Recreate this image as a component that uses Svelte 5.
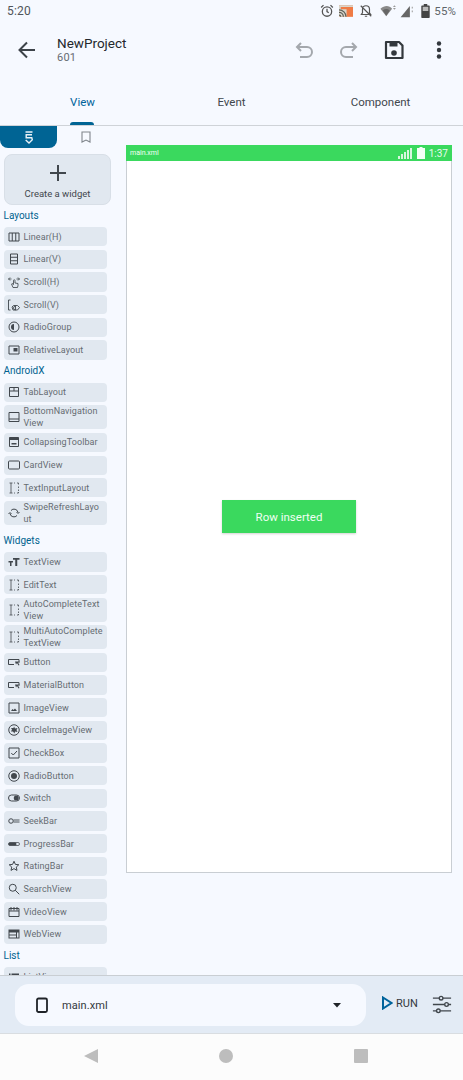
<script>
  const icons = {
    linh: '<path d="M2 4h20v16H2zM8.500 4v16M15.500 4v16" fill="none" stroke="currentColor" stroke-width="2"/>',
    linv: '<path d="M5 2h14v20H5zM5 8.500h14M5 15.500h14" fill="none" stroke="currentColor" stroke-width="2"/>',
    sh: '<path d="M10 23l-3-7 1-1 3 2V9a1.500 1.500 0 0 1 3 0v5l6 1v4l-1 4zM1 6l3-3M1 6l3 3M23 6l-3-3M23 6l-3 3M1 6h6M17 6h6" fill="none" stroke="currentColor" stroke-width="1.700"/>',
    sv: '<path d="M1 2h4M1 2v20h4M10 22l-2-6 3-3 8 0 4 4-4 5h-6zM15 14a4 4 0 1 0 .1 8z" fill="none" stroke="currentColor" stroke-width="1.800"/>',
    radio: '<circle cx="12" cy="12" r="10" fill="none" stroke="currentColor" stroke-width="2"/><path d="M12 6a6 6 0 0 0 0 12z" fill="currentColor"/>',
    rel: '<path d="M2 4h20v16H2z" fill="none" stroke="currentColor" stroke-width="2"/><path d="M11 8h8v7h-8z" fill="currentColor"/>',
    tab: '<path d="M3 3h18v18H3zM3 10h18M12 3v7" fill="none" stroke="currentColor" stroke-width="2"/>',
    bottom: '<path d="M2 3h20v18H2zM2 16h20" fill="none" stroke="currentColor" stroke-width="2"/>',
    coll: '<path d="M3 3h18v18H3z" fill="none" stroke="currentColor" stroke-width="2"/><path d="M3 3h18v5H3z" fill="currentColor"/><path d="M7 14h10v3H7z" fill="currentColor"/>',
    card: '<rect x="1" y="4" width="22" height="16" rx="2" fill="none" stroke="currentColor" stroke-width="2"/>',
    input: '<path d="M3 2h6M3 22h6M6 2v20M12 2h2M12 22h2M18 2h3v3M21 9v3M21 15v3M21 20v2h-3" fill="none" stroke="currentColor" stroke-width="1.600"/>',
    swipe: '<path d="M4 13a8 8 0 0 0 14 4M20 11A8 8 0 0 0 6 7M17 10l3 3 3-3M1 14l3-3 3 3" fill="none" stroke="currentColor" stroke-width="2"/>',
    text: '<path d="M10 4h13v3.500h-4.500V20h-4V7.500H10zM1 10h9v3H7v7H4v-7H1z" fill="currentColor"/>',
    button: '<path d="M22 13V7H1v10h11" fill="none" stroke="currentColor" stroke-width="2"/><path d="M14 11h9v2h-3l3 5-2 1-3-5-2 3z" fill="currentColor"/>',
    image: '<path d="M2 2h20v20H2z" fill="none" stroke="currentColor" stroke-width="2"/><path d="M6 18l3-4 2 2 3-3 4 5z" fill="currentColor"/>',
    circle: '<circle cx="12" cy="12" r="10.500" fill="none" stroke="currentColor" stroke-width="2"/><path d="M12 5l2 4 5-1-2 4 2 4-5-1-1 4-3-4-4 0 2-4-2-3 5 0z" fill="currentColor"/>',
    check: '<path d="M2 2h20v20H2z" fill="none" stroke="currentColor" stroke-width="2"/><path d="M6.500 12l4 4L18 8" fill="none" stroke="currentColor" stroke-width="2"/>',
    radiob: '<circle cx="12" cy="12" r="10.500" fill="none" stroke="currentColor" stroke-width="2"/><circle cx="12" cy="12" r="6" fill="currentColor"/>',
    sw: '<rect x="1" y="6" width="22" height="12" rx="6" fill="none" stroke="currentColor" stroke-width="2"/><circle cx="16.500" cy="12" r="5" fill="currentColor"/>',
    seek: '<circle cx="6" cy="12" r="4.500" fill="none" stroke="currentColor" stroke-width="2"/><path d="M11 10h12M11 14h12" stroke="currentColor" stroke-width="1.800"/>',
    progress: '<rect x="1" y="9" width="22" height="6" rx="3" fill="none" stroke="currentColor" stroke-width="1.500"/><rect x="1" y="9" width="16" height="6" rx="3" fill="currentColor"/>',
    star: '<path d="M12 2.500l2.800 6.300 6.800.7-5.100 4.600 1.500 6.700L12 17.300l-6 3.500 1.500-6.700-5.100-4.600 6.800-.7z" fill="none" stroke="currentColor" stroke-width="2"/>',
    search: '<circle cx="9.500" cy="9.500" r="7" fill="none" stroke="currentColor" stroke-width="2"/><path d="M14.500 14.500l8 8" stroke="currentColor" stroke-width="2"/>',
    video: '<path d="M2 5h20v16H2zM2 10h20" fill="none" stroke="currentColor" stroke-width="2"/><path d="M6 2v7M12 2v7M18 2v7" stroke="currentColor" stroke-width="2"/>',
    web: '<path d="M1 3h22v18H1z" fill="currentColor"/><path d="M3 9h13v4H3zM3 15h13v4H3zM18 9h3v10h-3z" fill="#e1e8f0"/>',
    list: '<path d="M2 5h3v3H2zM7 5h15v3H7z" fill="currentColor"/>'
  };

  const sections = [
    { title: 'Layouts', items: [['linh', 'Linear(H)'], ['linv', 'Linear(V)'], ['sh', 'Scroll(H)'], ['sv', 'Scroll(V)'], ['radio', 'RadioGroup'], ['rel', 'RelativeLayout']] },
    { title: 'AndroidX', extra: true, items: [['tab', 'TabLayout'], ['bottom', 'BottomNavigation\nView'], ['coll', 'CollapsingToolbar'], ['card', 'CardView'], ['input', 'TextInputLayout'], ['swipe', 'SwipeRefreshLayo\nut']] },
    { title: 'Widgets', items: [['text', 'TextView'], ['input', 'EditText'], ['input', 'AutoCompleteText\nView'], ['input', 'MultiAutoComplete\nTextView'], ['button', 'Button'], ['button', 'MaterialButton'], ['image', 'ImageView'], ['circle', 'CircleImageView'], ['check', 'CheckBox'], ['radiob', 'RadioButton'], ['sw', 'Switch'], ['seek', 'SeekBar'], ['progress', 'ProgressBar'], ['star', 'RatingBar'], ['search', 'SearchView'], ['video', 'VideoView'], ['web', 'WebView']] },
    { title: 'List', items: [['list', 'ListView']] }
  ];
</script>

<div class="screen">
  <header class="status">
    <span class="time">5:20</span>
    <div class="status-icons">
      <svg width="14" height="14" viewBox="0 0 24 24"><circle cx="12" cy="13" r="8" fill="none" stroke="#555" stroke-width="2.200"/><path d="M12 8v5l3 2M2 6l4-4M22 6l-4-4" fill="none" stroke="#555" stroke-width="2.200"/></svg>
      <svg class="cast" width="14" height="12" viewBox="0 0 24 20"><path d="M0 0h24v20H0z" fill="#ef7b45"/><path d="M0 0h24v3H3v4H0zM0 7h13v13H0z" fill="#d9d6cc"/><path d="M0 8a12 12 0 0 1 12 12M0 12.500A7.500 7.500 0 0 1 7.500 20M0 17a3 3 0 0 1 3 3" fill="none" stroke="#5f6058" stroke-width="2.200"/></svg>
      <svg class="bell" width="14" height="14" viewBox="0 0 24 24"><path d="M12 3a6 6 0 0 0-6 6v6l-2 3h16l-2-3V9a6 6 0 0 0-6-6zM10 21h4M3 3l18 18" fill="none" stroke="#555" stroke-width="2"/></svg>
      <svg class="wifi" width="18" height="14" viewBox="0 0 30 24"><path d="M2 8c7-6 15-6 20 0l-10 13z" fill="#8a8a8a"/><path d="M6 11c4-3 8-3 12 0l-6 9z" fill="#666"/><path d="M26 2l2.500 3h-5zM26 10l2.500-3h-5z" fill="#999"/></svg>
      <svg class="signal" width="16" height="14" viewBox="0 0 26 22"><path d="M1 21L16 3v18z" fill="#666"/><path d="M19 4h2v3h-2zM19 10h2v3h-2z" fill="#aaa"/></svg>
      <svg class="battery" width="9" height="14" viewBox="0 0 12 20"><path d="M3.500 0h5v2H11a1 1 0 0 1 1 1v16a1 1 0 0 1-1 1H1a1 1 0 0 1-1-1V3a1 1 0 0 1 1-1h2.500z" fill="#444"/><path d="M2 4h8v6H2z" fill="#bbb"/></svg>
      <span class="pct">55%</span>
    </div>
  </header>

  <div class="toolbar">
    <svg class="back" width="24" height="24" viewBox="0 0 24 24"><path d="M20 12H5M12 4.500L4.500 12l7.500 7.500" fill="none" stroke="#3d4349" stroke-width="2"/></svg>
    <div class="titles">
      <div class="title">NewProject</div>
      <div class="sub">601</div>
    </div>
    <div class="actions">
      <svg class="act" width="24" height="24" viewBox="0 0 24 24"><path d="M9 5L5 9l4 4M5 9h10a4.500 4.500 0 0 1 0 10H8" fill="none" stroke="#a4a8ad" stroke-width="2"/></svg>
      <svg class="act" width="24" height="24" viewBox="0 0 24 24"><path d="M15 5l4 4-4 4M19 9H9a4.500 4.500 0 0 0 0 10h7" fill="none" stroke="#a4a8ad" stroke-width="2"/></svg>
      <svg class="act" width="24" height="24" viewBox="0 0 24 24"><path d="M4 4h13l3.500 3.500V20H4z" fill="none" stroke="#33383d" stroke-width="2.200" stroke-linejoin="round"/><path d="M7.500 4h8v4.500h-8z" fill="#33383d"/><circle cx="12" cy="15" r="2.800" fill="#33383d"/></svg>
      <svg class="act" width="24" height="24" viewBox="0 0 24 24"><circle cx="12" cy="5.500" r="2.200" fill="#33383d"/><circle cx="12" cy="12" r="2.200" fill="#33383d"/><circle cx="12" cy="18.500" r="2.200" fill="#33383d"/></svg>
    </div>
  </div>

  <nav class="tabs">
    <div class="tab active">View<span class="ind"></span></div>
    <div class="tab">Event</div>
    <div class="tab">Component</div>
  </nav>

  <main class="main">
    <aside class="side">
      <div class="side-tabs">
        <div class="side-tab on">
          <svg width="8" height="13" viewBox="0 0 8 13"><path d="M.5 1h7M7 3.800H1.200v3h5.600l.5 2L4 12 .7 9" fill="none" stroke="#e8f1f7" stroke-width="1.400"/></svg>
        </div>
        <div class="side-tab">
          <svg width="10" height="12" viewBox="0 0 10 12"><path d="M1 1h8v10L5 9l-4 2z" fill="none" stroke="#80868c" stroke-width="1.100"/></svg>
        </div>
      </div>
      <div class="create">
        <svg width="20" height="20" viewBox="0 0 20 20"><path d="M10 2v16M2 10h16" stroke="#41474d" stroke-width="2"/></svg>
        <span>Create a widget</span>
      </div>
      <div class="palette">
        {#each sections as s}
          <div class="sec">{s.title}</div>
          <div class="items" class:extra={s.extra}>
            {#each s.items as [ic, label]}
              <div class="item">
                <svg class="ic" viewBox="0 0 24 24">{@html icons[ic]}</svg>
                <span class="lbl">{label}</span>
              </div>
            {/each}
          </div>
        {/each}
      </div>
    </aside>

    <section class="stage">
      <div class="phone">
        <div class="phone-bar">
          <span class="fname">main.xml</span>
          <div class="phone-st">
            <svg width="15" height="11" viewBox="0 0 15 11"><path d="M0 8h2v3H0zM3 6h2v5H3zM6 4h2v7H6zM9 2h2v9H9zM12 0h2v11h-2z" fill="#d8f6df"/></svg>
            <svg width="8" height="12" viewBox="0 0 8 12"><path d="M2.500 0h3v1H8v11H0V1h2.500z" fill="#f4fff6"/></svg>
            <span class="clock">1:37</span>
          </div>
        </div>
        <div class="canvas">
          <div class="toast">Row inserted</div>
        </div>
      </div>
    </section>
  </main>

  <div class="bottom">
    <div class="file">
      <svg width="24" height="24" viewBox="0 0 24 24"><rect x="7" y="5.500" width="10" height="13.500" rx="1.500" fill="none" stroke="#1f2328" stroke-width="1.800"/></svg>
      <span class="fn">main.xml</span>
      <svg class="caret" width="8" height="5" viewBox="0 0 8 5"><path d="M0 0h8L4 4.500z" fill="#1f2328"/></svg>
    </div>
    <div class="run">
      <svg width="12" height="14" viewBox="0 0 12 14"><path d="M2 1.500L10.500 7 2 12.500z" fill="none" stroke="#00639b" stroke-width="2"/></svg>
      <span>RUN</span>
    </div>
    <svg class="tune" width="20" height="19" viewBox="0 0 22 20"><g fill="none" stroke="#41474d" stroke-width="1.500"><path d="M1 3h7M12 3h9M1 10h13M18 10h3M1 17h4M9 17h12"/><circle cx="10" cy="3" r="2"/><circle cx="16" cy="10" r="2"/><circle cx="7" cy="17" r="2"/></g></svg>
  </div>

  <footer class="nav">
    <svg width="16" height="16" viewBox="0 0 16 16"><path d="M15 1v14L1 8z" fill="#bdbdbd"/></svg>
    <svg width="16" height="16" viewBox="0 0 16 16"><circle cx="8" cy="8" r="7" fill="#bdbdbd"/></svg>
    <svg width="16" height="16" viewBox="0 0 16 16"><rect x="1" y="1" width="14" height="14" rx="1" fill="#bdbdbd"/></svg>
  </footer>
</div>

<style>
  :global(body) { margin: 0; background: #f6f9ff; }
  .screen {
    width: 463px; height: 1080px; overflow: hidden;
    display: flex; flex-direction: column;
    background: #f6f9ff;
    font-family: Roboto, "Liberation Sans", sans-serif;
    color: #33383d;
  }
  .status { height: 22px; flex: none; display: flex; align-items: center; justify-content: space-between; padding: 0 7px; }
  .time { font-size: 12px; color: #50555a; letter-spacing: .2px; }
  .status-icons { display: flex; align-items: center; gap: 5px; }
  .pct { font-size: 11.500px; color: #60656a; margin-left: -1px; letter-spacing: .1px; }
  .bell { margin-left: 1px; }
  .wifi { margin-left: 1px; }
  .signal { margin-left: -2px; }

  .toolbar { height: 56px; flex: none; display: flex; align-items: center; }
  .back { margin-left: 15px; }
  .titles { margin-left: 18px; display: flex; flex-direction: column; margin-top: -1px; }
  .title { font-size: 13.500px; line-height: 16px; color: #24282c; }
  .sub { font-size: 11px; line-height: 13px; color: #666c72; letter-spacing: .2px; }
  .actions { margin-left: auto; margin-right: 12px; display: flex; gap: 21px; }

  .tabs { height: 48px; flex: none; display: grid; grid-template-columns: repeat(3, 149px); padding-left: 8px; box-sizing: border-box; border-bottom: 1px solid #cfd3d8; }
  .tab { position: relative; display: flex; justify-content: center; padding-top: 17px; font-size: 11.500px; color: #41474d; }
  .tab.active { color: #00639b; }
  .ind { position: absolute; bottom: 0; left: 62px; width: 24px; height: 3px; border-radius: 3px 3px 0 0; background: #006494; }

  .main { flex: 1; min-height: 0; display: flex; }
  .side { width: 126px; flex: none; display: flex; flex-direction: column; min-height: 0; }
  .side-tabs { display: grid; grid-template-columns: 57px 57px; height: 22px; flex: none; }
  .side-tab { display: flex; align-items: center; justify-content: center; }
  .side-tab.on { background: #006494; border-radius: 0 0 8px 8px; }
  .create {
    margin: 6px 15px 0 4px; height: 51px; flex: none; box-sizing: border-box;
    background: #e1e8f0; border: 1px solid #d8dfe7; border-radius: 8px;
    display: flex; flex-direction: column; align-items: center; justify-content: flex-end; padding-bottom: 5px; gap: 5px;
    font-size: 9.500px; color: #41474d;
  }
  .palette { flex: 1; min-height: 0; overflow: hidden; padding: 4.500px 19px 0 3.500px; }
  .sec { font-size: 10px; line-height: 12px; color: #00638f; margin-bottom: 5.500px; }
  .items { display: flex; flex-direction: column; gap: 3.400px; margin-bottom: 5.500px; }
  .items.extra { margin-bottom: 10px; }
  .item {
    min-height: 19.300px; box-sizing: border-box; border-radius: 4px; background: #e1e8f0;
    display: flex; align-items: center; padding: 0 3px 0 4px; gap: 4px;
  }
  .ic { width: 12px; height: 12px; flex: none; color: #41474d; }
  .lbl { font-size: 9px; line-height: 12px; color: #666c72; letter-spacing: .1px; white-space: pre-line; }

  .stage { flex: 1; min-width: 0; padding-top: 19px; padding-right: 11px; }
  .phone { width: 326px; height: 728px; box-sizing: border-box; display: flex; flex-direction: column; background: #fff; border: 1px solid #c9ced3; border-top: none; }
  .phone-bar { height: 16px; flex: none; margin: 0 -1px; background: #3ad95e; display: flex; align-items: center; justify-content: space-between; padding: 0 4px; color: #fff; }
  .fname { font-size: 7px; color: #f2fff5; }
  .phone-st { display: flex; align-items: center; gap: 4px; }
  .clock { font-size: 10px; color: #e8fbed; }
  .canvas { flex: 1; display: flex; align-items: center; justify-content: center; }
  .toast { width: 134px; height: 33px; background: #3ad95e; color: #eefff2; font-size: 11.500px; display: flex; align-items: center; justify-content: center; box-shadow: 0 1px 2px rgba(0,0,0,.18); }

  .bottom { height: 59px; flex: none; background: #e3ebf5; border-top: 1px solid #c9ced3; border-bottom: 1px solid #d9dde1; box-sizing: border-box; display: flex; align-items: center; padding-left: 15px; }
  .file { width: 351px; height: 42px; background: #f6f9ff; border-radius: 14px; display: flex; align-items: center; padding-left: 15px; box-sizing: border-box; margin-top: 1px; }
  .fn { font-size: 11px; margin-left: 8px; color: #33383d; letter-spacing: .1px; }
  .caret { margin-left: auto; margin-right: 25px; }
  .run { margin-left: 15px; display: flex; align-items: center; gap: 3px; font-size: 11px; color: #33383d; margin-top: -3px; }
  .tune { margin-left: 14px; margin-top: -1px; }

  .nav { height: 46px; flex: none; background: #fcfcfc; display: flex; align-items: center; padding-left: 83px; gap: 119px; padding-bottom: 3px; box-sizing: border-box; }
</style>
